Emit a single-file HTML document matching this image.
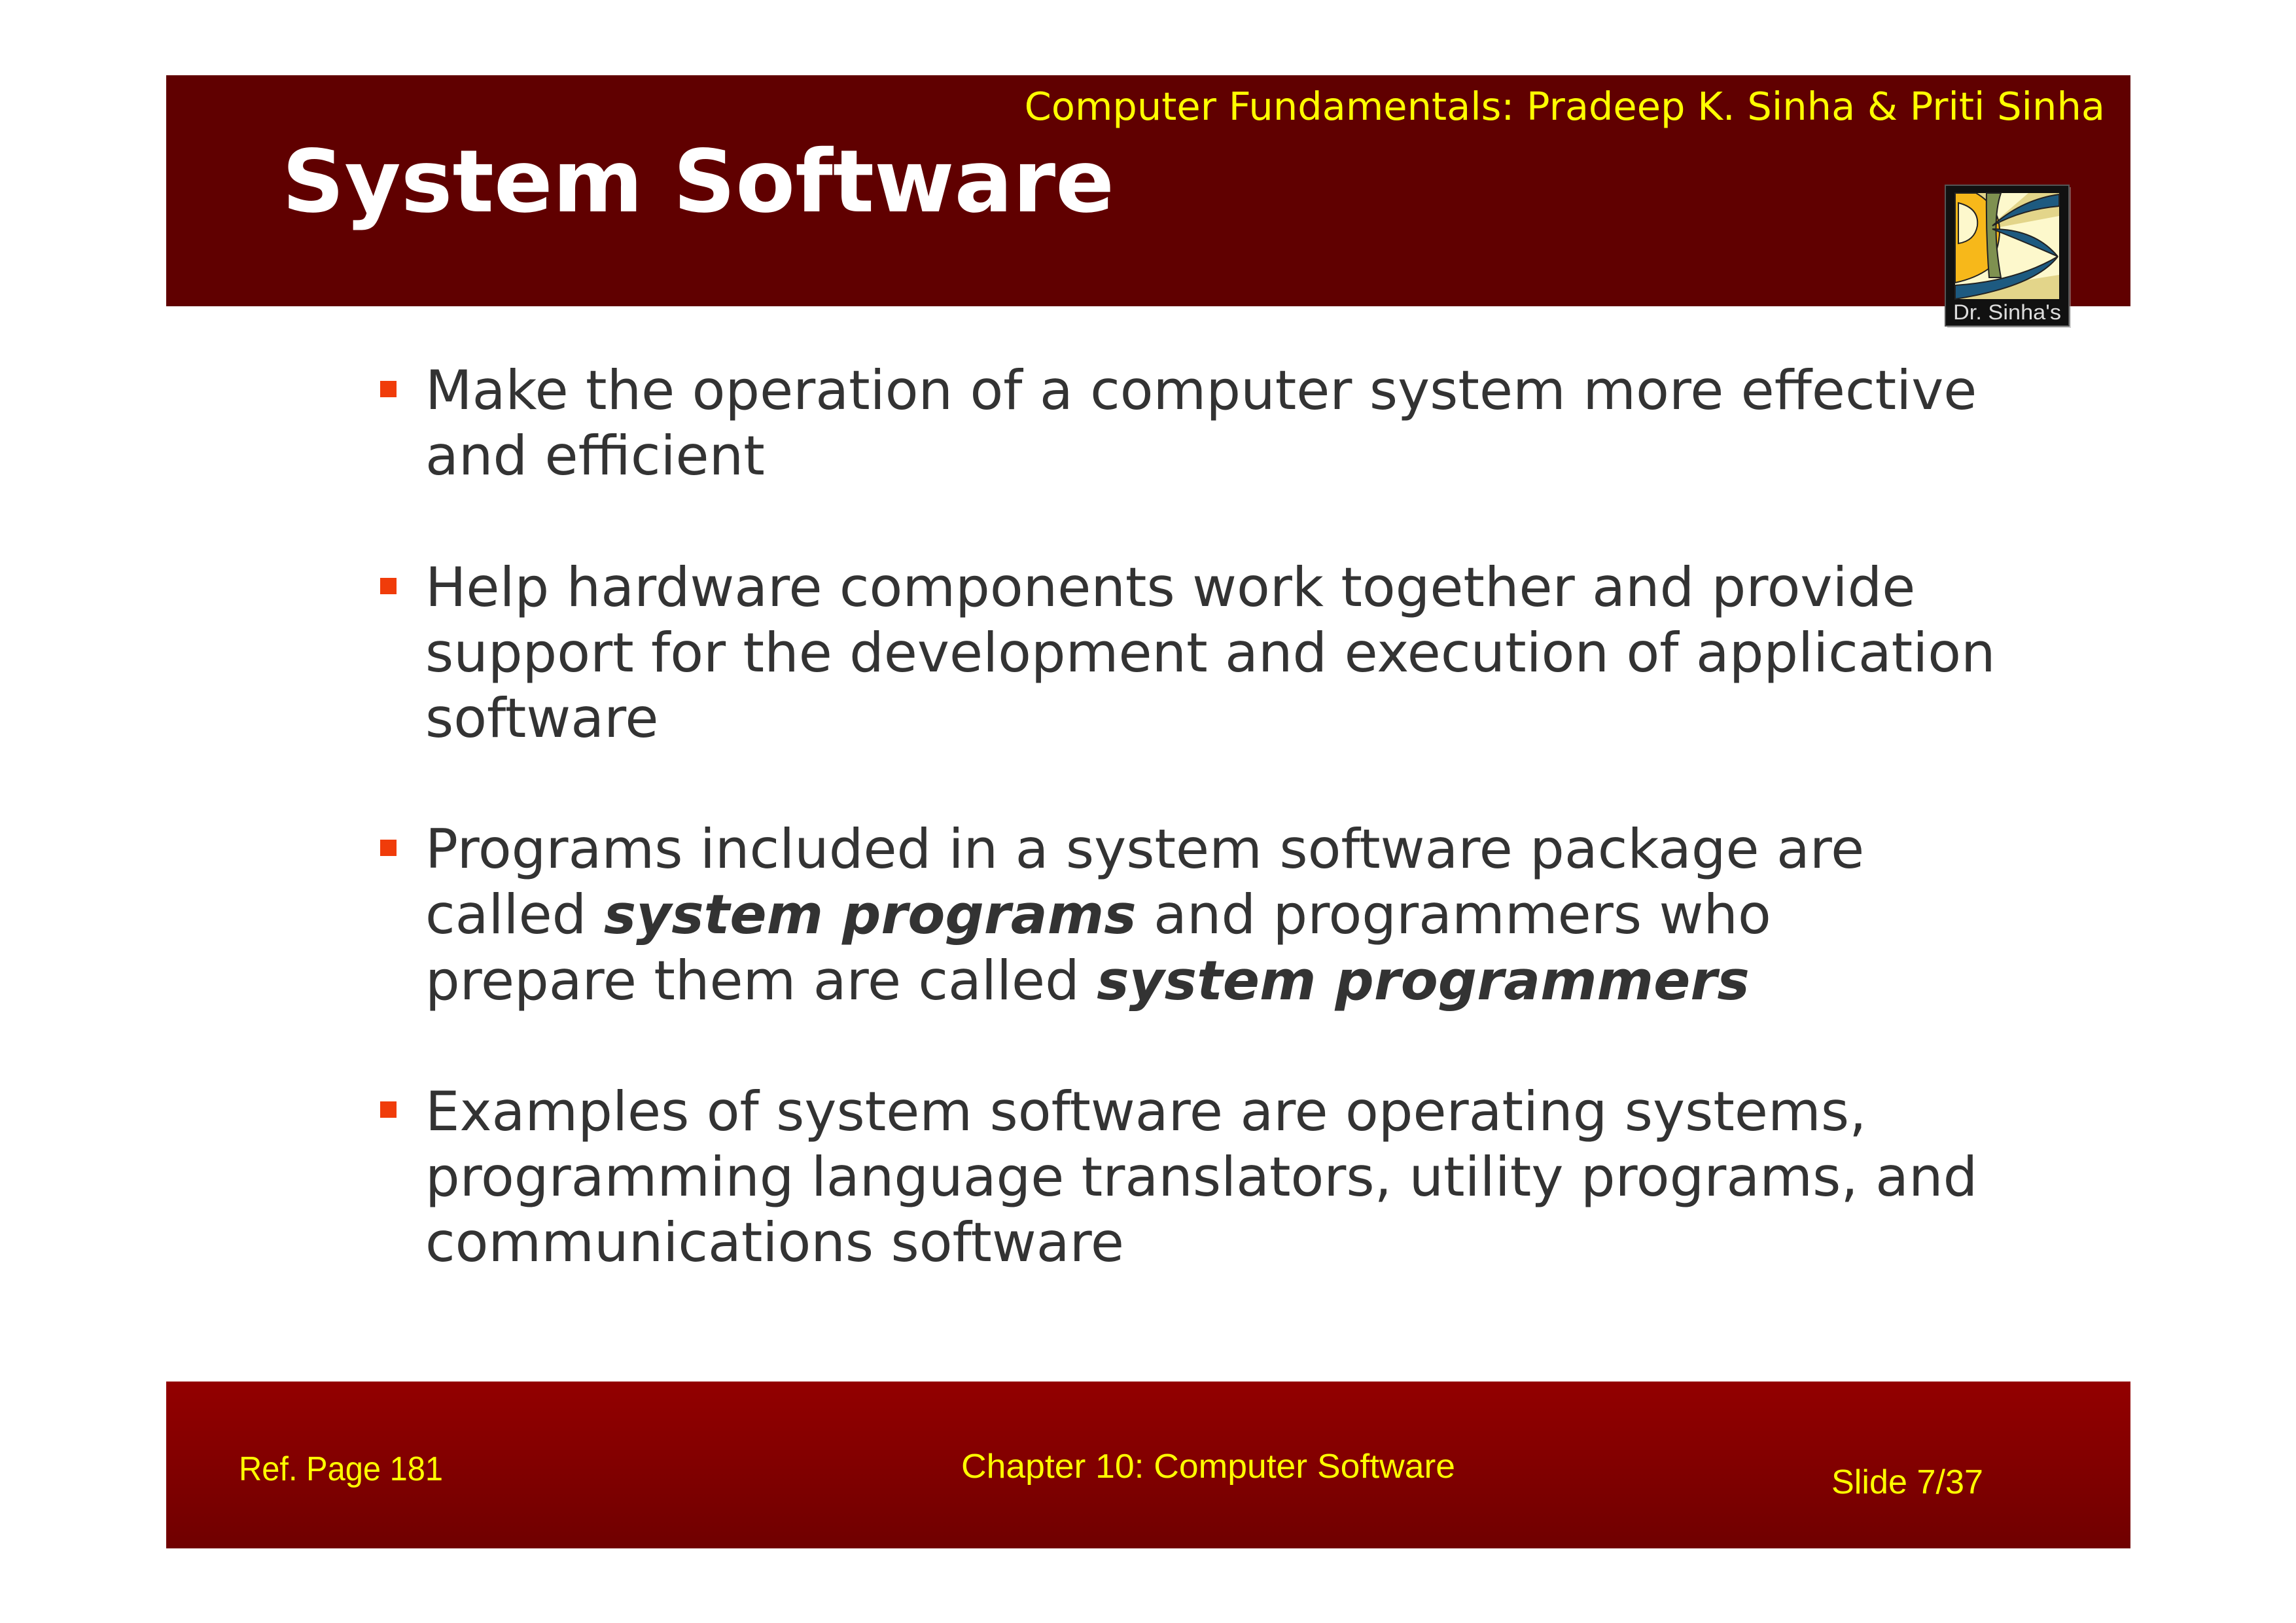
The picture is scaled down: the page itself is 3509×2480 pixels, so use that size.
<!DOCTYPE html>
<html><head><meta charset="utf-8"><style>
html,body{margin:0;padding:0;background:#fff;}
svg{display:block;}
</style></head><body>
<svg width="3509" height="2480" viewBox="0 0 3509 2480" xmlns="http://www.w3.org/2000/svg">
<defs>
<linearGradient id="fg" x1="0" y1="0" x2="0" y2="1">
<stop offset="0" stop-color="#930000"/><stop offset="1" stop-color="#700000"/>
</linearGradient>
</defs>
<rect width="3509" height="2480" fill="#fff"/>
<rect x="254" y="115" width="3002" height="353" fill="#600000"/>
<text x="3217" y="183" text-anchor="end" font-family="DejaVu Sans, sans-serif" font-size="59" fill="#ffff00">Computer Fundamentals: Pradeep K. Sinha &amp; Priti Sinha</text>
<text x="431" y="323" font-family="DejaVu Sans, sans-serif" font-weight="bold" font-size="132" fill="#fff" textLength="1272" lengthAdjust="spacingAndGlyphs">System Software</text>
<rect x="2976" y="286" width="189" height="215" fill="#999" opacity="0.5"/>
<rect x="2973" y="283" width="189" height="215" fill="#111" stroke="#555" stroke-width="2"/>
<rect x="2988" y="295" width="159" height="162" fill="#e3d58a"/>
<path d="M2988 360 L3147 330 L3147 420 L2988 445 Z" fill="#fdf8cc"/>
<path d="M3042 295 L3100 295 L3042 345 Z" fill="#fdf8cc"/>
<path d="M2988 295 L3020 295 Q3080 330 3040 410 Q3020 425 2988 432 Z" fill="#f7b81a" stroke="#222" stroke-width="2"/>
<path d="M2993 310 Q3025 318 3022 345 Q3018 368 2993 372 Z" fill="#fdf8cc" stroke="#222" stroke-width="2"/>
<path d="M3036 295 L3058 295 Q3043 340 3058 424 L3040 424 Q3035 360 3036 295 Z" fill="#7f9150" stroke="#222" stroke-width="2"/>
<path d="M3045 345 Q3090 305 3147 297 L3147 315 Q3090 320 3045 345 Z" fill="#1d5a80" stroke="#222" stroke-width="2"/>
<path d="M3045 350 Q3110 350 3145 392 Q3100 372 3045 350 Z" fill="#1d5a80" stroke="#222" stroke-width="2"/>
<path d="M2988 436 Q3080 430 3145 392 Q3110 438 2988 457 Z" fill="#1d5a80" stroke="#222" stroke-width="2"/>
<text x="2985" y="488" font-family="Liberation Sans, sans-serif" font-size="32" fill="#ddd" textLength="165" lengthAdjust="spacingAndGlyphs">Dr. Sinha's</text>
<g fill="#f03c0a">
<rect x="581" y="582" width="25" height="25"/>
<rect x="581" y="883" width="25" height="25"/>
<rect x="581" y="1283" width="25" height="25"/>
<rect x="581" y="1683" width="25" height="25"/>
</g>
<g font-family="DejaVu Sans, sans-serif" font-size="83" fill="#333">
<text x="650" y="625">Make the operation of a computer system more effective</text>
<text x="650" y="725">and efficient</text>
<text x="650" y="926">Help hardware components work together and provide</text>
<text x="650" y="1026">support for the development and execution of application</text>
<text x="650" y="1126">software</text>
<text x="650" y="1326">Programs included in a system software package are</text>
<text x="650" y="1426">called <tspan font-weight="bold" font-style="italic">system programs</tspan> and programmers who</text>
<text x="650" y="1527">prepare them are called <tspan font-weight="bold" font-style="italic">system programmers</tspan></text>
<text x="650" y="1727">Examples of system software are operating systems,</text>
<text x="650" y="1827">programming language translators, utility programs, and</text>
<text x="650" y="1927">communications software</text>
</g>
<rect x="254" y="2111" width="3002" height="255" fill="url(#fg)"/>
<g font-family="Liberation Sans, sans-serif" font-size="52" fill="#ffff00">
<text x="365" y="2262" textLength="312" lengthAdjust="spacingAndGlyphs">Ref. Page 181</text>
<text x="1469" y="2258" textLength="755" lengthAdjust="spacingAndGlyphs">Chapter 10: Computer Software</text>
<text x="2799" y="2282" textLength="232" lengthAdjust="spacingAndGlyphs">Slide 7/37</text>
</g>
</svg>
</body></html>
